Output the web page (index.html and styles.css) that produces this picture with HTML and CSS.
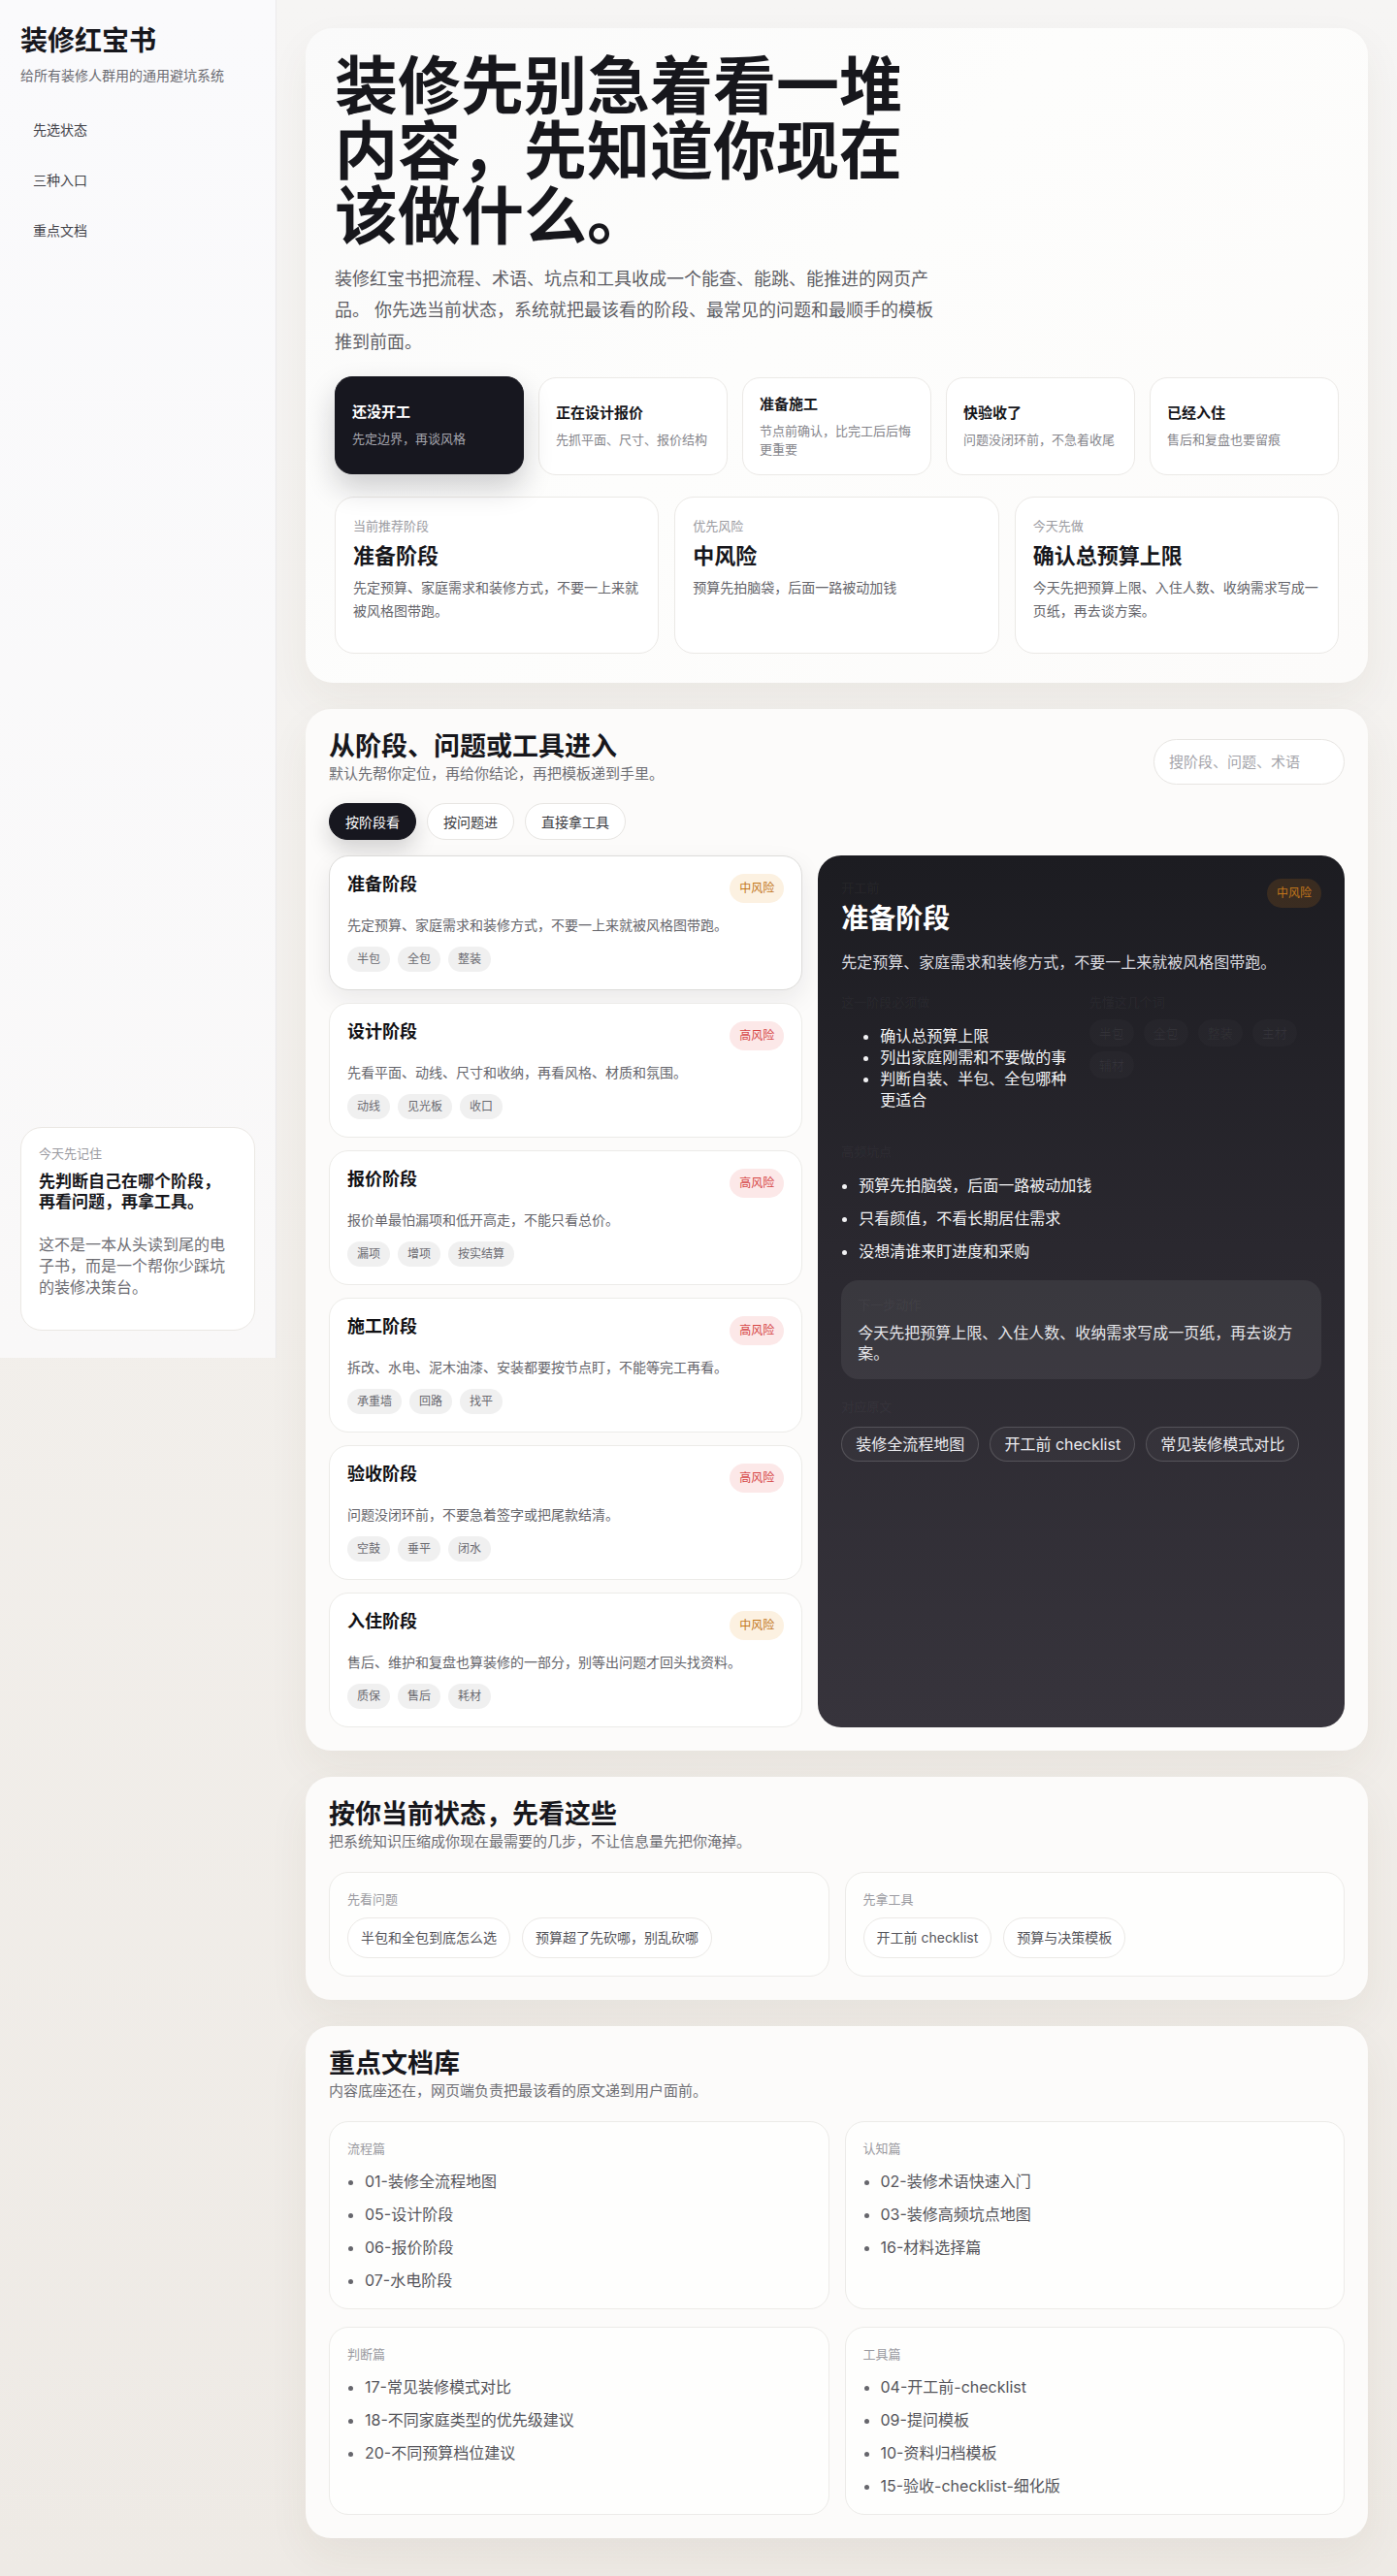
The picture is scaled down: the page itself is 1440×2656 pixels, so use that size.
FILE: index.html
```html
<!DOCTYPE html>
<html lang="zh-CN">
<head>
<meta charset="utf-8">
<title>装修红宝书</title>
<link rel="stylesheet" href="styles.css">
</head>
<body>
<div class="app">
  <aside class="sidebar">
    <div class="brand">
      <h1>装修红宝书</h1>
      <p>给所有装修人群用的通用避坑系统</p>
    </div>
    <nav class="nav">
      <a href="#status">先选状态</a>
      <a href="#entry">三种入口</a>
      <a href="#docs">重点文档</a>
    </nav>
    <div class="side-note">
      <div class="eyebrow">今天先记住</div>
      <strong>先判断自己在哪个阶段，再看问题，再拿工具。</strong>
      <p>这不是一本从头读到尾的电子书，而是一个帮你少踩坑的装修决策台。</p>
    </div>
  </aside>

  <main class="main">
    <section class="hero" id="status">
      <h2 class="hero-title">装修先别急着看一堆内容，先知道你现在该做什么。</h2>
      <p class="hero-lead">装修红宝书把流程、术语、坑点和工具收成一个能查、能跳、能推进的网页产品。 你先选当前状态，系统就把最该看的阶段、最常见的问题和最顺手的模板推到前面。</p>
      <div class="status-row">
        <div class="status active"><b>还没开工</b><span>先定边界，再谈风格</span></div>
        <div class="status"><b>正在设计报价</b><span>先抓平面、尺寸、报价结构</span></div>
        <div class="status"><b>准备施工</b><span>节点前确认，比完工后后悔更重要</span></div>
        <div class="status"><b>快验收了</b><span>问题没闭环前，不急着收尾</span></div>
        <div class="status"><b>已经入住</b><span>售后和复盘也要留痕</span></div>
      </div>
      <div class="summary-row">
        <div class="summary">
          <div class="eyebrow">当前推荐阶段</div>
          <h3>准备阶段</h3>
          <p>先定预算、家庭需求和装修方式，不要一上来就被风格图带跑。</p>
        </div>
        <div class="summary">
          <div class="eyebrow">优先风险</div>
          <h3>中风险</h3>
          <p>预算先拍脑袋，后面一路被动加钱</p>
        </div>
        <div class="summary">
          <div class="eyebrow">今天先做</div>
          <h3>确认总预算上限</h3>
          <p>今天先把预算上限、入住人数、收纳需求写成一页纸，再去谈方案。</p>
        </div>
      </div>
    </section>

    <section class="panel" id="entry">
      <div class="panel-head">
        <div>
          <h2>从阶段、问题或工具进入</h2>
          <p>默认先帮你定位，再给你结论，再把模板递到手里。</p>
        </div>
        <input class="search" type="text" placeholder="搜阶段、问题、术语">
      </div>
      <div class="tabs">
        <button class="tab active">按阶段看</button>
        <button class="tab">按问题进</button>
        <button class="tab">直接拿工具</button>
      </div>
      <div class="stage-grid">
        <div class="stage-list">
          <div class="stage active">
            <div class="stage-head"><h4>准备阶段</h4><span class="badge mid">中风险</span></div>
            <p>先定预算、家庭需求和装修方式，不要一上来就被风格图带跑。</p>
            <div class="tags"><span>半包</span><span>全包</span><span>整装</span></div>
          </div>
          <div class="stage">
            <div class="stage-head"><h4>设计阶段</h4><span class="badge high">高风险</span></div>
            <p>先看平面、动线、尺寸和收纳，再看风格、材质和氛围。</p>
            <div class="tags"><span>动线</span><span>见光板</span><span>收口</span></div>
          </div>
          <div class="stage">
            <div class="stage-head"><h4>报价阶段</h4><span class="badge high">高风险</span></div>
            <p>报价单最怕漏项和低开高走，不能只看总价。</p>
            <div class="tags"><span>漏项</span><span>增项</span><span>按实结算</span></div>
          </div>
          <div class="stage">
            <div class="stage-head"><h4>施工阶段</h4><span class="badge high">高风险</span></div>
            <p>拆改、水电、泥木油漆、安装都要按节点盯，不能等完工再看。</p>
            <div class="tags"><span>承重墙</span><span>回路</span><span>找平</span></div>
          </div>
          <div class="stage">
            <div class="stage-head"><h4>验收阶段</h4><span class="badge high">高风险</span></div>
            <p>问题没闭环前，不要急着签字或把尾款结清。</p>
            <div class="tags"><span>空鼓</span><span>垂平</span><span>闭水</span></div>
          </div>
          <div class="stage">
            <div class="stage-head"><h4>入住阶段</h4><span class="badge mid">中风险</span></div>
            <p>售后、维护和复盘也算装修的一部分，别等出问题才回头找资料。</p>
            <div class="tags"><span>质保</span><span>售后</span><span>耗材</span></div>
          </div>
        </div>

        <div class="detail">
          <div class="detail-head">
            <div>
              <div class="faint">开工前</div>
              <h3>准备阶段</h3>
            </div>
            <span class="badge dark-mid">中风险</span>
          </div>
          <p class="detail-desc">先定预算、家庭需求和装修方式，不要一上来就被风格图带跑。</p>
          <div class="detail-cols">
            <div>
              <div class="faint">这一阶段必须做</div>
              <ul class="must">
                <li>确认总预算上限</li>
                <li>列出家庭刚需和不要做的事</li>
                <li>判断自装、半包、全包哪种更适合</li>
              </ul>
            </div>
            <div>
              <div class="faint">先懂这几个词</div>
              <div class="ghost-tags"><span>半包</span><span>全包</span><span>整装</span><span>主材</span><span>辅材</span></div>
            </div>
          </div>
          <div class="faint pit-label">高频坑点</div>
          <ul class="pits">
            <li>预算先拍脑袋，后面一路被动加钱</li>
            <li>只看颜值，不看长期居住需求</li>
            <li>没想清谁来盯进度和采购</li>
          </ul>
          <div class="next">
            <div class="faint">下一步动作</div>
            <p>今天先把预算上限、入住人数、收纳需求写成一页纸，再去谈方案。</p>
          </div>
          <div class="faint link-label">对应原文</div>
          <div class="links">
            <a href="#">装修全流程地图</a>
            <a href="#">开工前 checklist</a>
            <a href="#">常见装修模式对比</a>
          </div>
        </div>
      </div>
    </section>

    <section class="panel">
      <div class="panel-head">
        <div>
          <h2>按你当前状态，先看这些</h2>
          <p>把系统知识压缩成你现在最需要的几步，不让信息量先把你淹掉。</p>
        </div>
      </div>
      <div class="two-col">
        <div class="box">
          <div class="eyebrow">先看问题</div>
          <div class="pills"><span>半包和全包到底怎么选</span><span>预算超了先砍哪，别乱砍哪</span></div>
        </div>
        <div class="box">
          <div class="eyebrow">先拿工具</div>
          <div class="pills"><span>开工前 checklist</span><span>预算与决策模板</span></div>
        </div>
      </div>
    </section>

    <section class="panel" id="docs">
      <div class="panel-head">
        <div>
          <h2>重点文档库</h2>
          <p>内容底座还在，网页端负责把最该看的原文递到用户面前。</p>
        </div>
      </div>
      <div class="two-col docs">
        <div class="box">
          <div class="eyebrow">流程篇</div>
          <ul class="doc-list">
            <li>01-装修全流程地图</li>
            <li>05-设计阶段</li>
            <li>06-报价阶段</li>
            <li>07-水电阶段</li>
          </ul>
        </div>
        <div class="box">
          <div class="eyebrow">认知篇</div>
          <ul class="doc-list">
            <li>02-装修术语快速入门</li>
            <li>03-装修高频坑点地图</li>
            <li>16-材料选择篇</li>
          </ul>
        </div>
        <div class="box">
          <div class="eyebrow">判断篇</div>
          <ul class="doc-list">
            <li>17-常见装修模式对比</li>
            <li>18-不同家庭类型的优先级建议</li>
            <li>20-不同预算档位建议</li>
          </ul>
        </div>
        <div class="box">
          <div class="eyebrow">工具篇</div>
          <ul class="doc-list">
            <li>04-开工前-checklist</li>
            <li>09-提问模板</li>
            <li>10-资料归档模板</li>
            <li>15-验收-checklist-细化版</li>
          </ul>
        </div>
      </div>
    </section>
  </main>
</div>
</body>
</html>
```

FILE: styles.css
```css
* { box-sizing: border-box; }

html, body {
  margin: 0;
  padding: 0;
}

body {
  font-family: Inter, "Noto Sans CJK SC", "Noto Sans", sans-serif;
  color: #17171c;
  background: linear-gradient(180deg, #f6f5f4 0%, #f2efeb 50%, #eeeae5 100%);
  min-height: 2656px;
}

.app {
  display: grid;
  grid-template-columns: 285px 1fr;
  align-items: start;
}

/* Sidebar */
.sidebar {
  height: 1400px;
  padding: 25px 21px 28px;
  background: linear-gradient(180deg, #fafafc 0%, #f9f8f8 100%);
  border-right: 1px solid #ebeaec;
  display: flex;
  flex-direction: column;
}

.brand h1 {
  margin: 0;
  font-size: 28px;
  line-height: 35px;
  font-weight: 700;
  color: #17171c;
}

.brand p {
  margin: 8px 0 0;
  font-size: 14px;
  line-height: 20px;
  color: #6b6b72;
}

.nav {
  margin-top: 20px;
  display: flex;
  flex-direction: column;
}

.nav a {
  display: block;
  padding: 16px 13px;
  font-size: 14px;
  line-height: 20px;
  color: #44444a;
  text-decoration: none;
  border-radius: 12px;
}

.side-note {
  margin-top: auto;
  background: #ffffff;
  border: 1px solid #ebe8e4;
  border-radius: 22px;
  padding: 17px 20px 33px 18px;
}

.eyebrow {
  font-size: 13px;
  line-height: 18px;
  color: #9b9ba1;
}

.side-note strong {
  display: block;
  margin-top: 10px;
  max-width: 198px;
  font-size: 17px;
  line-height: 21px;
  font-weight: 700;
  color: #17171c;
}

.side-note p {
  margin: 22px 0 0;
  font-size: 16px;
  line-height: 22px;
  color: #6d6d73;
}

/* Main */
.main {
  padding: 29px 30px 36px;
  display: flex;
  flex-direction: column;
  gap: 27px;
}

.hero {
  background: linear-gradient(135deg, #fafafa 0%, #fdfdfc 45%, #fcfbfa 100%);
  border-radius: 28px;
  padding: 26px 30px 30px;
  box-shadow: 0 18px 44px rgba(80, 60, 40, 0.06);
}

.hero-title {
  margin: 0;
  width: 600px;
  font-size: 65px;
  line-height: 67px;
  font-weight: 700;
  color: #17171c;
}

.hero-lead {
  margin: 16px 0 0;
  max-width: 620px;
  font-size: 18px;
  line-height: 1.8;
  color: #5d5d64;
}

.status-row {
  margin-top: 20px;
  display: grid;
  grid-template-columns: repeat(5, 1fr);
  gap: 15px;
}

.status {
  min-height: 101px;
  background: #ffffff;
  border: 1px solid #ebe9e6;
  border-radius: 18px;
  padding: 14px 17px;
  display: flex;
  flex-direction: column;
  justify-content: center;
  gap: 8px;
}

.status b {
  font-size: 15px;
  line-height: 20px;
  font-weight: 700;
  color: #17171c;
}

.status span {
  font-size: 13px;
  line-height: 19px;
  color: #85858b;
}

.status.active {
  background: #17171f;
  border-color: #17171f;
  box-shadow: 0 14px 30px rgba(20, 20, 30, 0.2);
  transform: translateY(-1px);
}

.status.active b { color: #ffffff; }
.status.active span { color: #a5a5ad; }

.summary-row {
  margin-top: 22px;
  display: grid;
  grid-template-columns: repeat(3, 1fr);
  gap: 16px;
}

.summary {
  min-height: 162px;
  background: #ffffff;
  border: 1px solid #ebe9e6;
  border-radius: 20px;
  padding: 20px 18px;
}

.summary h3 {
  margin: 7px 0 0;
  font-size: 22px;
  line-height: 30px;
  font-weight: 700;
}

.summary p {
  margin: 6px 0 0;
  font-size: 14px;
  line-height: 24px;
  color: #64646a;
}

/* Panels */
.panel {
  background: #fcfbfa;
  border-radius: 26px;
  padding: 22px 24px 24px;
  box-shadow: 0 18px 44px rgba(80, 60, 40, 0.06);
}

.panel-head {
  display: flex;
  justify-content: space-between;
  align-items: flex-end;
}

.panel-head h2 {
  margin: 0;
  font-size: 27px;
  line-height: 34px;
  font-weight: 700;
  color: #17171c;
}

.panel-head p {
  margin: 0;
  font-size: 15px;
  line-height: 22px;
  color: #6e6e74;
}

.search {
  width: 197px;
  height: 47px;
  border: 1px solid #e7e5e2;
  border-radius: 999px;
  background: #ffffff;
  padding: 0 15px;
  font-family: inherit;
  font-size: 15px;
  color: #333;
  outline: none;
}

.search::placeholder { color: #a5a5ab; }

.tabs {
  margin-top: 19px;
  display: flex;
  gap: 11px;
}

.tab {
  height: 38px;
  padding: 0 16px;
  border: 1px solid #e7e5e2;
  border-radius: 999px;
  background: #ffffff;
  font-family: inherit;
  font-size: 14px;
  color: #3a3a40;
}

.tab.active {
  background: #17171f;
  border-color: #17171f;
  color: #ffffff;
  box-shadow: 0 10px 22px rgba(20, 20, 30, 0.18);
}

.stage-grid {
  margin-top: 16px;
  display: grid;
  grid-template-columns: minmax(0, 0.9fr) minmax(0, 1fr);
  gap: 16px;
}

.stage-list {
  display: flex;
  flex-direction: column;
  gap: 13px;
}

.stage {
  background: #ffffff;
  border: 1px solid #ecebe8;
  border-radius: 20px;
  padding: 18px;
}

.stage.active {
  border-color: #dcdbd9;
  box-shadow: 0 10px 26px rgba(30, 30, 40, 0.08);
}

.stage-head {
  display: flex;
  justify-content: space-between;
  align-items: flex-start;
}

.stage h4 {
  margin: 0;
  font-size: 18px;
  line-height: 22px;
  font-weight: 700;
  color: #111114;
}

.badge {
  font-size: 12px;
  line-height: 16px;
  padding: 7px 10px;
  border-radius: 999px;
  white-space: nowrap;
}

.badge.mid { background: #fcf1e1; color: #c2761b; }
.badge.high { background: #fce8e8; color: #d64545; }
.badge.dark-mid { background: rgba(194, 118, 27, 0.18); color: #c2761b; }

.stage p {
  margin: 12px 0 0;
  font-size: 14px;
  line-height: 21px;
  color: #65656b;
}

.tags {
  margin-top: 12px;
  display: flex;
  gap: 8px;
}

.tags span {
  font-size: 12px;
  line-height: 16px;
  padding: 5px 10px;
  border-radius: 999px;
  background: #f0f0f0;
  color: #6a6a70;
}

/* Detail */
.detail {
  border-radius: 24px;
  padding: 24px;
  background: linear-gradient(180deg, #1c1c21 0%, #2a282f 45%, #37343c 100%);
  color: #f2f2f4;
}

.detail-head {
  display: flex;
  justify-content: space-between;
  align-items: flex-start;
}

.faint {
  font-size: 13px;
  line-height: 18px;
  color: rgba(255, 255, 255, 0.05);
}

.detail h3 {
  margin: 6px 0 0;
  font-size: 28px;
  line-height: 34px;
  font-weight: 700;
  color: #ffffff;
}

.detail-desc {
  margin: 16px 0 0;
  font-size: 16px;
  line-height: 24px;
  color: #dcdce0;
}

.detail-cols {
  margin-top: 20px;
  display: grid;
  grid-template-columns: 1fr 1fr;
  gap: 16px;
}

.must {
  margin: 15px 0 0;
  padding-left: 40px;
  font-size: 16px;
  line-height: 22px;
  color: #f2f2f4;
}

.ghost-tags {
  margin-top: 9px;
  display: flex;
  flex-wrap: wrap;
  gap: 5px 10px;
}

.ghost-tags span {
  font-size: 13px;
  line-height: 18px;
  padding: 5px 10px;
  border-radius: 999px;
  background: rgba(255, 255, 255, 0.02);
  color: rgba(255, 255, 255, 0.06);
}

.pit-label { margin-top: 33px; }

.pits {
  margin: 15px 0 0;
  padding-left: 18px;
  font-size: 16px;
  line-height: 22px;
  color: #f2f2f4;
}

.pits li + li { margin-top: 12px; }

.next {
  margin-top: 19px;
  background: rgba(255, 255, 255, 0.07);
  border-radius: 18px;
  padding: 16px 17px;
}

.next p {
  margin: 10px 0 0;
  font-size: 16px;
  line-height: 21px;
  color: #e6e6ea;
}

.link-label { margin-top: 19px; }

.links {
  margin-top: 12px;
  display: flex;
  gap: 11px;
  flex-wrap: wrap;
}

.links a {
  font-size: 16px;
  line-height: 22px;
  padding: 6px 14px;
  border: 1px solid rgba(255, 255, 255, 0.16);
  border-radius: 999px;
  background: rgba(255, 255, 255, 0.03);
  color: #ececf0;
  text-decoration: none;
}

/* Two column boxes */
.two-col {
  margin-top: 20px;
  display: grid;
  grid-template-columns: 1fr 1fr;
  gap: 18px 16px;
}

.box {
  background: #fefefd;
  border: 1px solid #ecebe8;
  border-radius: 20px;
  padding: 18px;
}

.pills {
  margin-top: 10px;
  display: flex;
  flex-wrap: wrap;
  gap: 12px;
}

.pills span {
  font-size: 14px;
  line-height: 20px;
  padding: 10px 13px;
  border: 1px solid #ebe9e6;
  border-radius: 999px;
  background: #ffffff;
  color: #55555b;
}

.doc-list {
  margin: 14px 0 0;
  padding-left: 18px;
  font-size: 16px;
  line-height: 22px;
  color: #55555b;
}

.doc-list li + li { margin-top: 12px; }
.doc-list li::marker { color: #66666c; }
```
